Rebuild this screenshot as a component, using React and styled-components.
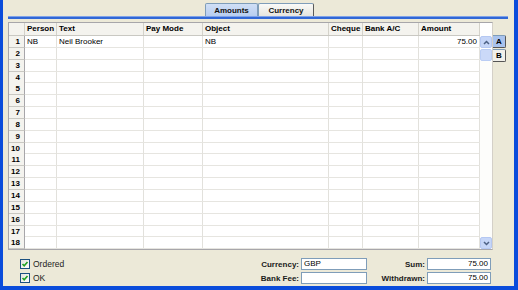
import React from "react";
import styled, { createGlobalStyle } from "styled-components";

const Global = createGlobalStyle`
  html, body { margin: 0; padding: 0; background: #ECE9D8; }
  body { font-family: "Liberation Sans", Arial, sans-serif; font-size: 8px; color: #000; }
  * { box-sizing: border-box; }
`;

const Frame = styled.div`
  width: 518px;
  height: 290px;
  background: #ECE9D8;
  border-left: 3px solid #0A4CDB;
  border-right: 4px solid #0A4CDB;
  border-bottom: 4px solid #0A4CDB;
  display: flex;
  flex-direction: column;
`;

const TabRow = styled.div`
  display: flex;
  height: 16px;
  padding: 3px 0 0 202px;
  align-items: flex-end;
`;

const Tab = styled.div`
  height: 13px;
  width: ${(p) => p.$w}px;
  display: flex;
  align-items: center;
  justify-content: center;
  font-weight: bold;
  font-size: 8px;
  border: 1px solid #7F9DB9;
  border-bottom: none;
  border-right-color: ${(p) => (p.$active ? "#7F9DB9" : "#5a5a5a")};
  border-radius: 2px 2px 0 0;
  background: ${(p) => (p.$active ? "linear-gradient(#D0DFF6, #B8CEF0)" : "linear-gradient(#FAFAF8, #E6E5DE)")};
  color: #111;
`;

const BlueBar = styled.div`
  margin: 0 6px 0 5px;
  height: 3px;
  background: #3168D6;
  border-top: 1px solid #7FA2E8;
`;

const Body = styled.div`
  display: flex;
  margin: 3px 0 0 5px;
`;

const Table = styled.div`
  width: 485px;
  border: 1px solid #A7A6AA;
  border-right-color: #D4D0C8;
  background: #fff;
  display: flex;
`;

const Columns = styled.div`
  display: flex;
  flex-direction: column;
  width: 471px;
`;

const cols = "16px 32px 87px 59px 126px 34px 56px 61px";

const HeadRow = styled.div`
  display: grid;
  grid-template-columns: ${cols};
  height: 13px;
  background: #F4F3EE;
  border-bottom: 1px solid #C9C8C2;
`;

const HeadCell = styled.div`
  font-weight: bold;
  padding-left: 2px;
  line-height: 12px;
  border-right: 1px solid #D4D2CA;
  white-space: nowrap;
  overflow: hidden;
`;

const Row = styled.div`
  display: grid;
  grid-template-columns: ${cols};
  height: 11.85px;
  border-bottom: 1px solid #E6E5E0;
`;

const NumCell = styled.div`
  background: #F4F3EE;
  font-weight: bold;
  text-align: right;
  padding-right: 4px;
  line-height: 11px;
  border-right: 1px solid #A7A6AA;
  border-bottom: 1px solid #C9C8C2;
  margin-bottom: -1px;
  font-size: 8px;
`;

const Cell = styled.div`
  padding: 0 2px;
  line-height: 11px;
  border-right: 1px solid #E2E1DC;
  text-align: ${(p) => (p.$right ? "right" : "left")};
  white-space: nowrap;
  overflow: hidden;
  color: #000;
`;

const Scroll = styled.div`
  width: 13px;
  display: flex;
  flex-direction: column;
  padding-top: 13px;
  background: #fff;
`;

const ScrollTrack = styled.div`
  flex: 1;
  background: #FDFDFB;
`;

const ScrollBtn = styled.div`
  height: 12px;
  width: 12px;
  background: #C6D6F8;
  border: 1px solid #B5C8F2;
  border-radius: 2px;
  display: flex;
  align-items: center;
  justify-content: center;
`;

const Thumb = styled.div`
  height: 12px;
  width: 12px;
  margin-top: 1px;
  background: #CBD9F8;
  border: 1px solid #BACDF4;
  border-radius: 2px;
`;

const SideTabs = styled.div`
  display: flex;
  flex-direction: column;
  padding-top: 13px;
  gap: 1px;
`;

const SideTab = styled.div`
  width: 13px;
  height: 13px;
  display: flex;
  align-items: center;
  justify-content: center;
  font-weight: bold;
  font-size: 8px;
  border: 1px solid #7F9DB9;
  border-left: none;
  border-right-color: #555;
  border-bottom-color: #555;
  border-radius: 0 2px 2px 0;
  background: ${(p) => (p.$active ? "#A9C3EE" : "#F1F0EA")};
`;

const Footer = styled.div`
  display: flex;
  padding: 8px 0 0 17px;
`;

const Checks = styled.div`
  display: flex;
  flex-direction: column;
  gap: 4px;
  width: 238px;
  padding-top: 1px;
`;

const CheckLine = styled.label`
  display: flex;
  align-items: center;
  gap: 3px;
  height: 10px;
  color: #222;
  font-size: 8.5px;
`;

const Box = styled.span`
  width: 10px;
  height: 10px;
  border: 1px solid #1C5180;
  background: linear-gradient(135deg, #E5E4DD, #fff);
  display: flex;
  align-items: center;
  justify-content: center;
`;

const Fields = styled.div`
  display: grid;
  grid-template-columns: 41px 66px 56px 64px;
  column-gap: 2px;
  row-gap: 2px;
  align-items: center;
`;

const Label = styled.div`
  font-weight: bold;
  text-align: right;
  white-space: nowrap;
  color: #1a1a1a;
`;

const Field = styled.div`
  height: 12px;
  border: 1px solid #7F9DB9;
  background: #fff;
  padding: 0 2px;
  line-height: 10px;
  text-align: ${(p) => (p.$right ? "right" : "left")};
`;

const Chevron = ({ down }) => (
  <svg width="7" height="5" viewBox="0 0 7 5">
    <path
      d={down ? "M1 1 L3.5 3.5 L6 1" : "M1 4 L3.5 1.5 L6 4"}
      stroke="#4D6185"
      strokeWidth="1.5"
      fill="none"
    />
  </svg>
);

const Tick = () => (
  <svg width="8" height="8" viewBox="0 0 8 8">
    <path d="M1.5 4 L3.2 5.8 L6.5 2" stroke="#21A121" strokeWidth="1.6" fill="none" />
  </svg>
);

const headers = ["", "Person", "Text", "Pay Mode", "Object", "Cheque", "Bank A/C", "Amount"];
const rows = Array.from({ length: 18 }, (_, i) =>
  i === 0 ? ["NB", "Neil Brooker", "", "NB", "", "", "75.00"] : ["", "", "", "", "", "", ""]
);

export default function App() {
  return (
    <>
      <Global />
      <Frame>
        <TabRow>
          <Tab $active $w={53}>Amounts</Tab>
          <Tab $w={56}>Currency</Tab>
        </TabRow>
        <BlueBar />
        <Body>
          <Table>
            <Columns>
              <HeadRow>
                {headers.map((h, i) => (
                  <HeadCell key={i}>{h}</HeadCell>
                ))}
              </HeadRow>
              {rows.map((r, i) => (
                <Row key={i}>
                  <NumCell>{i + 1}</NumCell>
                  {r.map((c, j) => (
                    <Cell key={j} $right={j === 6}>
                      {c}
                    </Cell>
                  ))}
                </Row>
              ))}
            </Columns>
            <Scroll>
              <ScrollBtn>
                <Chevron />
              </ScrollBtn>
              <Thumb />
              <ScrollTrack />
              <ScrollBtn>
                <Chevron down />
              </ScrollBtn>
            </Scroll>
          </Table>
          <SideTabs>
            <SideTab $active>A</SideTab>
            <SideTab>B</SideTab>
          </SideTabs>
        </Body>
        <Footer>
          <Checks>
            <CheckLine>
              <Box>
                <Tick />
              </Box>
              Ordered
            </CheckLine>
            <CheckLine>
              <Box>
                <Tick />
              </Box>
              OK
            </CheckLine>
          </Checks>
          <Fields>
            <Label>Currency:</Label>
            <Field>GBP</Field>
            <Label>Sum:</Label>
            <Field $right>75.00</Field>
            <Label>Bank Fee:</Label>
            <Field />
            <Label>Withdrawn:</Label>
            <Field $right>75.00</Field>
          </Fields>
        </Footer>
      </Frame>
    </>
  );
}
